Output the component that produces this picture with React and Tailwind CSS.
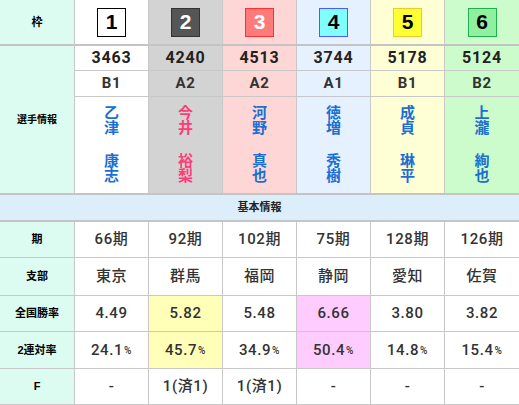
import React from 'react'

const racers = [
  { waku: 1, box: 'bg-white border-black text-black', col: 'bg-white', toban: '3463', cls: 'B1', sei: '乙津', mei: '康志', pink: false },
  { waku: 2, box: 'bg-[#555555] border-[#333333] text-white', col: 'bg-[#d3d3d3]', toban: '4240', cls: 'A2', sei: '今井', mei: '裕梨', pink: true },
  { waku: 3, box: 'bg-[#ff7b7b] border-[#ff3030] text-white', col: 'bg-[#ffd6d6]', toban: '4513', cls: 'A2', sei: '河野', mei: '真也', pink: false },
  { waku: 4, box: 'bg-[#80ffff] border-[#4a5cff] text-black', col: 'bg-[#e6f1ff]', toban: '3744', cls: 'A1', sei: '徳増', mei: '秀樹', pink: false },
  { waku: 5, box: 'bg-[#ffff33] border-[#f5c430] text-black', col: 'bg-[#ffffd6]', toban: '5178', cls: 'B1', sei: '成貞', mei: '琳平', pink: false },
  { waku: 6, box: 'bg-[#8ff0a0] border-[#1fae50] text-black', col: 'bg-[#ccfccc]', toban: '5124', cls: 'B2', sei: '上瀧', mei: '絢也', pink: false },
]

const rows = [
  { label: '期', h: 'h-[36px]', cells: ['66期', '92期', '102期', '75期', '128期', '126期'].map((v) => ({ v })) },
  { label: '支部', h: 'h-[38px]', cells: ['東京', '群馬', '福岡', '静岡', '愛知', '佐賀'].map((v) => ({ v })) },
  {
    label: '全国勝率',
    h: 'h-[36px]',
    cells: [
      { v: '4.49' },
      { v: '5.82', hl: 'bg-[#ffffb8]' },
      { v: '5.48' },
      { v: '6.66', hl: 'bg-[#ffccff]' },
      { v: '3.80' },
      { v: '3.82' },
    ],
  },
  {
    label: '2連対率',
    h: 'h-[37px]',
    cells: [
      { v: '24.1', pct: true },
      { v: '45.7', pct: true, hl: 'bg-[#ffffb8]' },
      { v: '34.9', pct: true },
      { v: '50.4', pct: true, hl: 'bg-[#ffccff]' },
      { v: '14.8', pct: true },
      { v: '15.4', pct: true },
    ],
  },
  { label: 'F', h: 'h-[36px]', cells: ['-', '1(済1)', '1(済1)', '-', '-', '-'].map((v) => ({ v })) },
]

const dataFont = { fontFamily: 'Roboto, "Noto Sans CJK JP", sans-serif' }

function Name({ sei, mei, pink }) {
  const color = pink ? 'text-[#ff3b7a]' : 'text-[#1a6fd0]'
  return (
    <div className={`flex flex-col items-center text-[15px] font-bold leading-[15px] ${color}`}>
      {sei.split('').map((c, i) => <span key={'s' + i}>{c}</span>)}
      <span className="h-[18px]" />
      {mei.split('').map((c, i) => <span key={'m' + i}>{c}</span>)}
    </div>
  )
}

export default function App() {
  const font = { fontFamily: '"Liberation Sans", "Noto Sans CJK JP", sans-serif' }
  return (
    <div className="w-[519px] h-[405px] overflow-hidden bg-white text-[#333]" style={font}>
      {/* 枠 */}
      <div className="flex h-[46px] border-b-2 border-[#c4c4c4]">
        <div className="w-[75px] shrink-0 bg-[#dcfcf1] border-r border-[#c8c8c8] flex items-center justify-center text-[11px] font-bold text-black">枠</div>
        {racers.map((r) => (
          <div key={r.waku} className={`w-[74px] shrink-0 border-r border-[#c8c8c8] last:border-r-0 flex items-center justify-center ${r.col}`}>
            <div className={`w-[29px] h-[29px] border-[1.5px] flex items-center justify-center text-[21px] font-bold ${r.box}`}>
              {r.waku}
            </div>
          </div>
        ))}
      </div>

      {/* 選手情報 */}
      <div className="flex h-[149px] border-b-2 border-[#c4c4c4]">
        <div className="w-[75px] shrink-0 bg-[#dcfcf1] border-r border-[#c8c8c8] flex items-center justify-center text-[10px] font-bold text-black">選手情報</div>
        {racers.map((r) => (
          <div key={r.waku} className={`w-[74px] shrink-0 border-r border-[#c8c8c8] last:border-r-0 flex flex-col ${r.col}`}>
            <div className="h-[25px] border-b border-[#c8c8c8] flex items-center justify-center text-[16px] font-bold tracking-[0.05em] text-[#222]" style={dataFont}>{r.toban}</div>
            <div className="h-[26px] border-b border-[#c8c8c8] flex items-center justify-center text-[15px] font-bold tracking-[0.05em] text-[#333]" style={dataFont}>{r.cls}</div>
            <div className="flex-1 flex items-center justify-center pb-[2px]">
              <Name sei={r.sei} mei={r.mei} pink={r.pink} />
            </div>
          </div>
        ))}
      </div>

      {/* 基本情報 */}
      <div className="h-[27px] bg-[#ddeefb] border-b-2 border-[#c4c4c4] flex items-center justify-center text-[11px] font-bold text-[#222]">基本情報</div>

      {rows.map((row) => (
        <div key={row.label} className={`flex border-b border-[#c8c8c8] ${row.h}`}>
          <div className="w-[75px] shrink-0 bg-[#dcfcf1] border-r border-[#c8c8c8] flex items-center justify-center text-[11px] font-bold text-black">{row.label}</div>
          {row.cells.map((c, i) => (
            <div key={i} className={`w-[74px] shrink-0 border-r border-[#c8c8c8] last:border-r-0 flex items-center justify-center text-[15px] font-medium tracking-[0.04em] text-[#333] ${c.hl || 'bg-white'}`} style={dataFont}>
              {c.v}
              {c.pct && <span className="text-[10px] ml-[1px]">%</span>}
            </div>
          ))}
        </div>
      ))}
    </div>
  )
}
